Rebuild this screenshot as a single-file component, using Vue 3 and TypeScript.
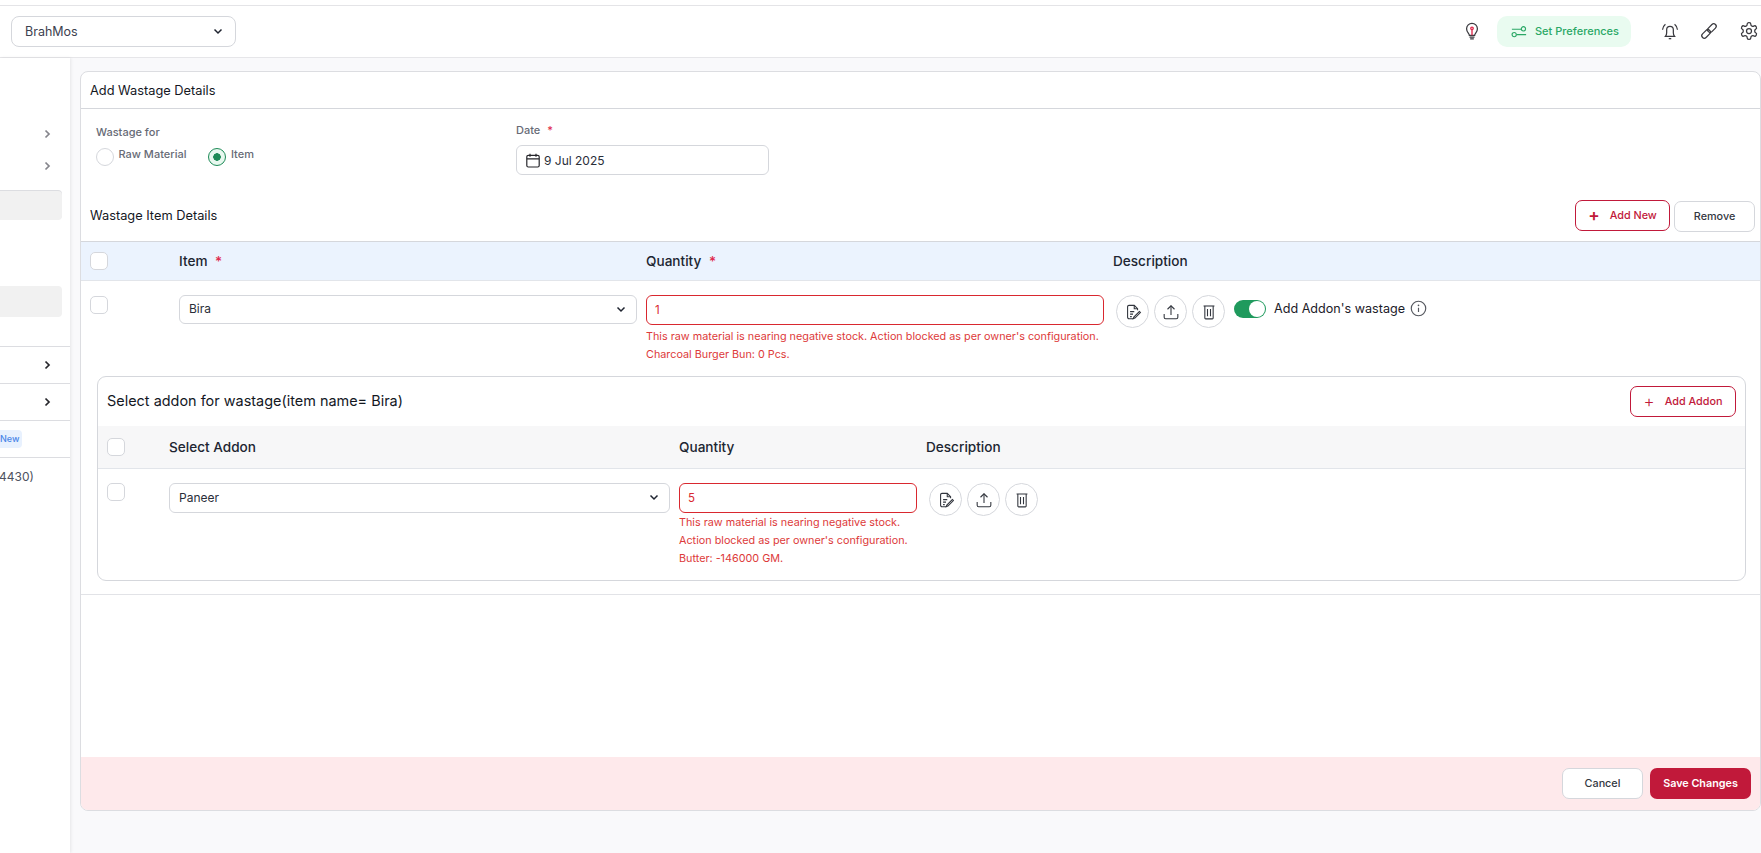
<script setup lang="ts">
interface ActionIcon {
  name: string
  paths: string[]
}

const actions: ActionIcon[] = [
  {
    name: 'note',
    paths: [
      'M12.5 20H7.2a1.7 1.7 0 0 1-1.7-1.7V5.7A1.7 1.7 0 0 1 7.2 4h6.3l4 4v2',
      'M13.5 4v4h4',
      'M8.5 11.5h5M8.5 14.5h3.5M8.5 17.5h2',
      'M19.6 11.4l1.3 1.3-6.6 6.6-2 .7.7-2z'
    ]
  },
  {
    name: 'upload',
    paths: ['M12 15.5V4.5', 'M7.8 8.7L12 4.5l4.2 4.2', 'M3.8 14.5v3.7A1.8 1.8 0 0 0 5.6 20h12.8a1.8 1.8 0 0 0 1.8-1.8v-3.7']
  },
  {
    name: 'trash',
    paths: ['M5.5 4.8h13', 'M7 4.8v14.4A1 1 0 0 0 8 20.200h8a1 1 0 0 0 1-1V4.800', 'M10.200 8.500v8.500M13.800 8.500v8.500']
  }
]

const itemErrors: string[] = [
  "This raw material is nearing negative stock. Action blocked as per owner's configuration.",
  'Charcoal Burger Bun: 0 Pcs.'
]

const addonErrors: string[] = [
  'This raw material is nearing negative stock.',
  "Action blocked as per owner's configuration.",
  'Butter: -146000 GM.'
]
</script>

<template>
  <div class="app">
    <div class="strip"></div>
    <header class="topbar">
      <div class="brand-select">
        <span>BrahMos</span>
        <svg class="chev" viewBox="0 0 12 12"><path d="M2.5 4.5L6 8l3.5-3.5" /></svg>
      </div>
      <div class="top-actions">
        <svg class="top-ic bulb" viewBox="0 0 24 24">
          <path d="M8.8 17.2c0-2.2-3.300-3.600-3.300-8A6.500 6.500 0 0 1 12 2.800a6.500 6.500 0 0 1 6.500 6.400c0 4.400-3.300 5.800-3.300 8z" />
          <path d="M9 19.300h6M9.800 21.500h4.400" />
          <path class="filament" d="M12 17v-7" />
          <circle class="filament" cx="12" cy="8.800" r="1.500" />
        </svg>
        <button class="pref-btn">
          <svg viewBox="0 0 18 14">
            <path d="M1 4.500h10.500M6.500 10.500H17" />
            <circle cx="14" cy="4" r="2.400" />
            <circle cx="3.600" cy="10.500" r="2.400" />
          </svg>
          <span>Set Preferences</span>
        </button>
        <svg class="top-ic bell" viewBox="0 0 24 24">
          <path d="M6.500 18.500c1-1.200 1.500-2.400 1.500-4.500v-3.500a4 4 0 0 1 8 0V14c0 2.100.5 3.300 1.500 4.500z" />
          <path d="M10.500 21.200h3" />
          <path d="M3 10.500C3.200 7.800 4.400 5.500 6.500 3.800M21 10.500C20.800 7.800 19.600 5.500 17.500 3.800" />
        </svg>
        <svg class="top-ic link" viewBox="0 0 24 24">
          <rect x="2.500" y="12.500" width="12" height="6" rx="3" transform="rotate(-45 8.500 15.500)" />
          <rect x="9.500" y="5.500" width="12" height="6" rx="3" transform="rotate(-45 15.500 8.500)" />
        </svg>
        <svg class="top-ic gear" viewBox="0 0 24 24">
          <path d="M12.220 2h-.44a2 2 0 0 0-2 2v.18a2 2 0 0 1-1 1.730l-.43.250a2 2 0 0 1-2 0l-.15-.08a2 2 0 0 0-2.730.730l-.22.380a2 2 0 0 0 .730 2.730l.15.100a2 2 0 0 1 1 1.720v.510a2 2 0 0 1-1 1.740l-.15.090a2 2 0 0 0-.730 2.730l.22.380a2 2 0 0 0 2.730.730l.15-.08a2 2 0 0 1 2 0l.43.250a2 2 0 0 1 1 1.730V20a2 2 0 0 0 2 2h.44a2 2 0 0 0 2-2v-.18a2 2 0 0 1 1-1.730l.43-.25a2 2 0 0 1 2 0l.15.080a2 2 0 0 0 2.730-.730l.22-.390a2 2 0 0 0-.730-2.730l-.15-.08a2 2 0 0 1-1-1.740v-.5a2 2 0 0 1 1-1.740l.15-.09a2 2 0 0 0 .730-2.730l-.22-.38a2 2 0 0 0-2.730-.73l-.15.080a2 2 0 0 1-2 0l-.43-.25a2 2 0 0 1-1-1.730V4a2 2 0 0 0-2-2z" />
          <circle cx="12" cy="12" r="3" />
        </svg>
      </div>
    </header>

    <div class="shell">
      <aside class="sidebar">
        <div class="side-row grey"><svg viewBox="0 0 10 10"><path d="M3.500 1.500L7 5 3.500 8.500" /></svg></div>
        <div class="side-row grey"><svg viewBox="0 0 10 10"><path d="M3.500 1.500L7 5 3.500 8.500" /></svg></div>
        <div class="side-active first"></div>
        <div class="side-active second"></div>
        <div class="side-link top-line"><svg viewBox="0 0 10 10"><path d="M3.500 1.500L7 5 3.500 8.500" /></svg></div>
        <div class="side-link"><svg viewBox="0 0 10 10"><path d="M3.500 1.500L7 5 3.500 8.500" /></svg></div>
        <div class="side-link badge-row"><span class="new-badge">New</span></div>
        <div class="side-link text-row"><span>4430)</span></div>
      </aside>

      <main class="main">
        <section class="card">
          <div class="card-head">Add Wastage Details</div>
          <div class="card-body">
            <div class="form-row">
              <div class="wastage-for">
                <div class="field-label">Wastage for</div>
                <div class="radios">
                  <label class="radio"><span class="dot"></span><span>Raw Material</span></label>
                  <label class="radio on"><span class="dot"></span><span>Item</span></label>
                </div>
              </div>
              <div class="date-field">
                <div class="field-label">Date <i>*</i></div>
                <div class="date-input">
                  <svg viewBox="0 0 16 16">
                    <rect x="1.800" y="2.800" width="12.400" height="11.700" rx="1.500" />
                    <path d="M1.800 6.300h12.400M5 1.200v3M11 1.200v3" />
                  </svg>
                  <span>9 Jul 2025</span>
                </div>
              </div>
            </div>

            <div class="details-head">
              <h3>Wastage Item Details</h3>
              <div class="details-btns">
                <button class="btn outline strong"><span class="plus">+</span>Add New</button>
                <button class="btn plain">Remove</button>
              </div>
            </div>

            <div class="grid item-grid table-head">
              <span class="check"></span>
              <span>Item <i>*</i></span>
              <span>Quantity <i>*</i></span>
              <span class="desc-title">Description</span>
            </div>
            <div class="grid item-grid table-row">
              <span class="check"></span>
              <div class="select">
                <span>Bira</span>
                <svg class="chev" viewBox="0 0 12 12"><path d="M2.500 4.500L6 8l3.500-3.500" /></svg>
              </div>
              <div>
                <div class="qty">1</div>
                <p v-for="line in itemErrors" :key="line" class="error">{{ line }}</p>
              </div>
              <div class="row-actions">
                <button v-for="a in actions" :key="a.name" class="round" :aria-label="a.name">
                  <svg viewBox="0 0 24 24"><path v-for="p in a.paths" :key="p" :d="p" /></svg>
                </button>
                <span class="toggle"><span></span></span>
                <span class="toggle-label">Add Addon's wastage</span>
                <svg class="info" viewBox="0 0 16 16">
                  <circle cx="8" cy="8" r="6.800" />
                  <path d="M8 7.300v4" />
                  <circle class="info-dot" cx="8" cy="5" r=".8" />
                </svg>
              </div>
            </div>

            <div class="addon-wrap">
              <div class="addon-panel">
                <div class="addon-head">
                  <h4>Select addon for wastage(item name= Bira)</h4>
                  <button class="btn outline addon-btn"><span class="plus thin">+</span>Add Addon</button>
                </div>
                <div class="grid addon-grid table-head light">
                  <span class="check"></span>
                  <span>Select Addon</span>
                  <span>Quantity</span>
                  <span>Description</span>
                </div>
                <div class="grid addon-grid table-row addon-row">
                  <span class="check"></span>
                  <div class="select">
                    <span>Paneer</span>
                    <svg class="chev" viewBox="0 0 12 12"><path d="M2.500 4.500L6 8l3.500-3.500" /></svg>
                  </div>
                  <div>
                    <div class="qty">5</div>
                    <p v-for="line in addonErrors" :key="line" class="error">{{ line }}</p>
                  </div>
                  <div class="row-actions">
                    <button v-for="a in actions" :key="a.name" class="round" :aria-label="a.name">
                      <svg viewBox="0 0 24 24"><path v-for="p in a.paths" :key="p" :d="p" /></svg>
                    </button>
                  </div>
                </div>
              </div>
            </div>
          </div>
          <footer class="card-foot">
            <button class="btn plain foot-cancel">Cancel</button>
            <button class="btn save">Save Changes</button>
          </footer>
        </section>
      </main>
    </div>
  </div>
</template>

<style>
html, body { margin: 0; background: #f9f9fb; }
</style>

<style scoped>
.app { width: 1761px; height: 853px; overflow: hidden; display: flex; flex-direction: column; font-family: Inter, "Noto Sans", sans-serif; color: #1f2430; background: #f9f9fb; }
.strip { height: 5px; background: #fff; border-bottom: 1px solid #e4e4e7; flex: none; }
.topbar { height: 52px; flex: none; background: #fff; border-bottom: 1px solid #e6e6e9; display: flex; align-items: center; justify-content: space-between; padding: 0 2px 1px 11px; box-sizing: border-box; }
.brand-select { width: 225px; height: 31px; box-sizing: border-box; border: 1px solid #d5d7dc; border-radius: 8px; display: flex; align-items: center; justify-content: space-between; padding: 0 11px 0 13px; font-size: 12.500px; color: #3c4150; }
.chev { width: 12px; height: 12px; fill: none; stroke: #1f2430; stroke-width: 1.500; }
.top-actions { display: flex; align-items: center; }
.top-ic { width: 20px; height: 20px; fill: none; stroke: #3a3a3f; stroke-width: 1.500; }
.bulb { margin-right: 15px; }
.filament { stroke: #e0274a; stroke-width: 1.600; }
.pref-btn { width: 134px; height: 31px; margin-right: 29px; border: 0; border-radius: 10px; background: #e9fbf0; display: flex; align-items: center; gap: 8px; padding: 0 0 0 14px; box-sizing: border-box; font: 500 11px Inter, sans-serif; color: #2ba866; }
.pref-btn svg { width: 16px; height: 13px; fill: none; stroke: #2ba866; stroke-width: 1.300; }
.bell { margin-right: 19px; }
.link { margin-right: 20px; }

.shell { flex: 1; display: flex; min-height: 0; }
.sidebar { width: 70px; flex: none; background: #fff; box-shadow: 1px 0 3px rgba(0, 0, 0, .08); padding-top: 60px; box-sizing: border-box; overflow: hidden; z-index: 1; }
.sidebar svg { width: 10px; height: 10px; fill: none; stroke-width: 1.700; }
.side-row { height: 32px; display: flex; align-items: center; justify-content: flex-end; padding-right: 18px; }
.side-row svg { stroke: #85858c; }
.side-active { width: 62px; background: #f1f1f1; border-radius: 0 4px 4px 0; }
.side-active.first { height: 29px; margin-top: 9px; box-shadow: 0 -1px 0 #dcdde1; }
.side-active.second { height: 31px; margin-top: 66px; }
.side-link { height: 37px; box-sizing: border-box; border-bottom: 1px solid #dcdde1; display: flex; align-items: center; justify-content: flex-end; padding-right: 18px; }
.side-link.top-line { border-top: 1px solid #dcdde1; height: 38px; margin-top: 29px; }
.side-link svg { stroke: #26262b; }
.badge-row { justify-content: flex-start; padding: 0; }
.new-badge { width: 22px; height: 18px; background: #e8f1fe; border-radius: 0 4px 4px 0; font-size: 9px; font-weight: 500; line-height: 18px; color: #4a86e8; }
.text-row { justify-content: flex-start; border: 0; padding: 0; font-size: 12px; color: #4d5260; }
.text-row span { margin-left: -1px; }

.main { flex: 1; min-width: 0; padding: 13px 0 0 10px; box-sizing: border-box; }
.card { height: 740px; width: 1681px; box-sizing: border-box; background: #fff; border: 1px solid #dcdde1; border-radius: 8px; display: flex; flex-direction: column; overflow: hidden; }
.card-head { height: 37px; flex: none; box-sizing: border-box; border-bottom: 1px solid #d5d7dc; padding-left: 9px; display: flex; align-items: center; font-size: 12.800px; font-weight: 400; color: #14181f; }
.card-body { flex: 1; min-height: 0; }
.form-row { height: 82px; display: flex; padding-left: 15px; box-sizing: border-box; }
.wastage-for { width: 420px; padding-top: 17px; }
.field-label { font-size: 11px; font-weight: 500; line-height: 13px; color: #676b76; }
.field-label i, .table-head i { font-style: normal; color: #e0274a; margin-left: 4px; }
.radios { display: flex; gap: 22px; margin-top: 9px; }
.radio { display: flex; align-items: flex-start; gap: 4.500px; font-size: 11px; font-weight: 500; color: #676b76; line-height: 13px; }
.dot { width: 18px; height: 18px; box-sizing: border-box; border: 1px solid #d5d7dc; border-radius: 50%; display: block; background: #fff; }
.radio.on .dot { border: 1.500px solid #1c8a56; background: radial-gradient(circle, #1c8a56 0 3.500px, #e8f8ef 4px); }
.date-field { padding-top: 15px; }
.date-input { width: 253px; height: 30px; margin-top: 8px; box-sizing: border-box; border: 1px solid #d5d7dc; border-radius: 6px; display: flex; align-items: center; gap: 3px; padding-left: 8px; font-size: 12px; color: #2a2e39; }
.date-input svg { width: 16px; height: 17px; fill: none; stroke: #26262b; stroke-width: 1.200; }
.details-head { height: 50px; box-sizing: border-box; padding: 9px 5px 0 9px; display: flex; align-items: flex-start; justify-content: space-between; }
.details-head h3 { margin: 7px 0 0; font-size: 12.800px; font-weight: 400; line-height: 17px; color: #14181f; }
.details-btns { display: flex; gap: 4px; }
.btn { box-sizing: border-box; height: 31px; border-radius: 7px; font: 500 10.800px Inter, sans-serif; display: inline-flex; align-items: center; justify-content: center; background: #fff; }
.btn.outline { border: 1px solid #c1193a; color: #c1193a; }
.strong { width: 95px; }
.plus { font-size: 17px; line-height: 1; font-weight: 600; margin-right: 10px; }
.plus.thin { font-weight: 300; }
.btn.plain { border: 1px solid #d5d7dc; color: #33373f; width: 81px; margin-top: 1px; }

.grid { display: grid; column-gap: 9px; padding-left: 9px; }
.item-grid { grid-template-columns: 80px 458px 458px 1fr; }
.addon-grid { grid-template-columns: 53px 501px 238px 1fr; }
.table-head { align-items: center; height: 40px; box-sizing: border-box; background: #ebf3fe; border-top: 1px solid #d5d7dc; border-bottom: 1px solid #e2e5ea; font-size: 13.600px; font-weight: 500; color: #202531; }
.table-head.light { height: 43px; background: #f7f7f8; border-top: 0; }
.check { width: 18px; height: 18px; box-sizing: border-box; border: 1px solid #d5d7dc; border-radius: 5px; background: #fff; display: block; }
.table-row { height: 95px; box-sizing: border-box; padding-top: 14px; }
.table-row .check { margin-top: 1px; }
.select { height: 29px; box-sizing: border-box; border: 1px solid #d5d7dc; border-radius: 6px; padding: 0 9px 2px; display: flex; align-items: center; justify-content: space-between; font-size: 12px; color: #2a2e39; }
.qty { height: 30px; box-sizing: border-box; border: 1px solid #d9282f; border-radius: 6px; padding: 0 8px; display: flex; align-items: center; font-size: 11.500px; color: #d9282f; }
.error { margin: 0; font-size: 10.800px; line-height: 18px; color: #dd3a3a; white-space: nowrap; }
.qty + .error { margin-top: 3px; }
.addon-row .qty + .error { margin-top: 1px; }
.row-actions { display: flex; align-items: flex-start; gap: 5px; margin-left: 3px; }
.round { width: 33px; height: 33px; padding: 0; box-sizing: border-box; border: 1px solid #d5d7dc; border-radius: 50%; background: #fff; display: flex; align-items: center; justify-content: center; }
.round svg { width: 20px; height: 20px; fill: none; stroke: #33373f; stroke-width: 1.300; }
.toggle { width: 32px; height: 18px; margin: 5px 0 0 4px; border-radius: 9px; background: #1f9a5d; position: relative; display: block; }
.toggle span { position: absolute; right: 1px; top: 1px; width: 16px; height: 16px; border-radius: 50%; background: #fff; }
.toggle-label { font-size: 12.600px; font-weight: 400; color: #1c2029; margin: 5px 0 0 3px; line-height: 18px; }
.info { width: 17px; height: 17px; margin: 5px 0 0 0; fill: none; stroke: #55585f; stroke-width: 1.100; }
.info-dot { fill: #55585f; stroke: none; }

.addon-wrap { padding: 0 14px 13px 16px; border-bottom: 1px solid #e2e3e7; }
.addon-panel { height: 205px; box-sizing: border-box; border: 1px solid #d5d7dc; border-radius: 9px; overflow: hidden; }
.addon-head { height: 49px; box-sizing: border-box; display: flex; align-items: flex-start; justify-content: space-between; padding: 9px 9px 0 9px; }
.addon-head h4 { margin: 6px 0 0 0; font-size: 14.450px; font-weight: 400; line-height: 18px; color: #14181f; }
.addon-btn { width: 106px; }
.addon-row { height: 111px; }
.addon-row .check { margin-top: 0; }
.addon-row .select { height: 30px; }
.card-foot { height: 53px; flex: none; background: #fee9eb; display: flex; align-items: center; justify-content: flex-end; gap: 7px; padding-right: 9px; box-sizing: border-box; }
.foot-cancel.plain { margin-top: 0; }
.save { width: 101px; border: 0; background: #c1193a; color: #fff; font-weight: 600; }
</style>
